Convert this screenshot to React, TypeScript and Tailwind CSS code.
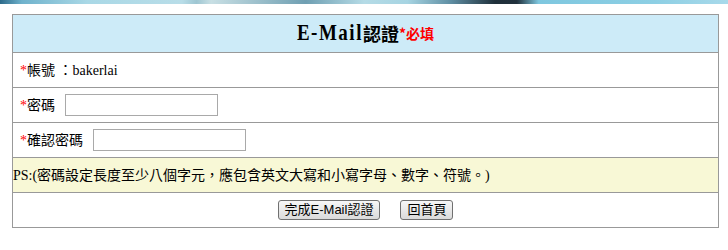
const BODY_FONT = "font-['Liberation_Serif','Noto_Sans_CJK_TC',serif]";

function Req() {
  return <span className="text-[#ff0000]">*</span>;
}

function Field({ label }: { label: string }) {
  return (
    <div className="flex h-[35px] items-center border-t border-[#999] pl-[7px]">
      <Req />
      <span>{label}</span>
      <input
        type="password"
        className="ml-[10px] h-[22px] w-[153px] border border-[#a9a9a9] bg-white px-1 outline-none"
      />
    </div>
  );
}

function Btn({ children }: { children: React.ReactNode }) {
  return (
    <button
      type="button"
      className="h-[20px] rounded-[3px] border border-[#707070] bg-gradient-to-b from-[#f7f7f7] to-[#dadada] px-[6px] font-['Liberation_Sans','Noto_Sans_CJK_TC',sans-serif] text-[13px] leading-[18px] text-black"
    >
      {children}
    </button>
  );
}

export default function App() {
  return (
    <div className={`h-[250px] w-[728px] overflow-hidden bg-white text-[14px] text-black ${BODY_FONT}`}>
      {/* banner image strip peeking in at the top */}
      <div className="h-[4px] w-full bg-[linear-gradient(90deg,#2c6a8a_0%,#6fb2cc_3%,#a9d8e6_12%,#b8dde8_25%,#9ec6d2_27%,#c8dfe4_29%,#6f9fb2_42%,#b5dbe6_50%,#a6d4e2_56%,#5e8da2_62%,#1f2f3a_68%,#20303c_71%,#7ec7df_74%,#8dcfe4_90%,#a8d9ea_100%)]" />

      <div className="ml-[12px] mt-[10px] w-[707px] border border-[#999]">
        <div className="flex h-[37px] items-center justify-center bg-[#cdebf8]">
          <span className="inline-block scale-y-[1.25] font-['Liberation_Serif',serif] text-[19px] font-bold tracking-[1.5px]">
            E-Mail
          </span>
          <span className="font-['Noto_Sans_CJK_TC',sans-serif] text-[18px] font-bold">認證</span>
          <span className="font-['Noto_Sans_CJK_TC',sans-serif] text-[14px] font-bold text-[#ff0000]">*必填</span>
        </div>

        <div className="flex h-[35px] items-center border-t border-[#999] pl-[7px]">
          <Req />
          <span>帳號 ：bakerlai</span>
        </div>

        <Field label="密碼" />
        <Field label="確認密碼" />

        <div className="flex h-[35px] items-center border-t border-[#999] bg-[#f8f8d6]">
          <span>PS:(密碼設定長度至少八個字元，應包含英文大寫和小寫字母、數字、符號。)</span>
        </div>

        <div className="flex h-[35px] items-center justify-center gap-[20px] border-t border-[#999]">
          <Btn>完成E-Mail認證</Btn>
          <Btn>回首頁</Btn>
        </div>
      </div>
    </div>
  );
}
